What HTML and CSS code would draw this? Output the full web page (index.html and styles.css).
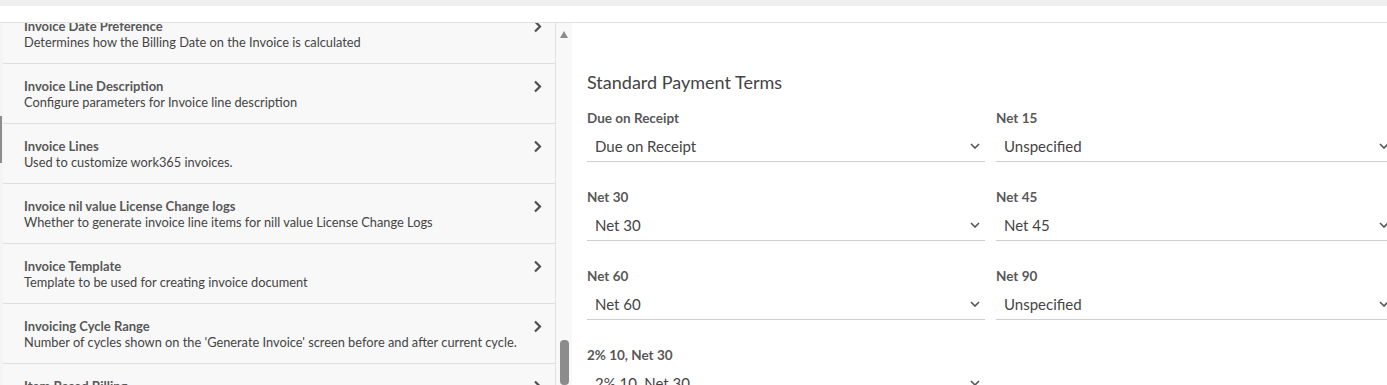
FILE: index.html
```html
<!DOCTYPE html>
<html>
<head>
  <title>Billing Settings</title>
  <link rel="stylesheet" href="styles.css">
</head>
<body>
  <div class="topbar"></div>

  <div class="main">
    <div class="edge"><div class="edge-thumb"></div></div>

    <div class="settings">
      <ul class="setting-list">
        <li class="setting">
          <div class="setting-text">
            <div class="setting-title">Invoice Date Preference</div>
            <div class="setting-desc">Determines how the Billing Date on the Invoice is calculated</div>
          </div>
          <svg class="chevron-right" width="9" height="13" viewBox="0 0 9 13"><polyline points="2,1.5 7,6.5 2,11.5"/></svg>
        </li>
        <li class="setting">
          <div class="setting-text">
            <div class="setting-title">Invoice Line Description</div>
            <div class="setting-desc">Configure parameters for Invoice line description</div>
          </div>
          <svg class="chevron-right" width="9" height="13" viewBox="0 0 9 13"><polyline points="2,1.5 7,6.5 2,11.5"/></svg>
        </li>
        <li class="setting">
          <div class="setting-text">
            <div class="setting-title">Invoice Lines</div>
            <div class="setting-desc">Used to customize work365 invoices.</div>
          </div>
          <svg class="chevron-right" width="9" height="13" viewBox="0 0 9 13"><polyline points="2,1.5 7,6.5 2,11.5"/></svg>
        </li>
        <li class="setting">
          <div class="setting-text">
            <div class="setting-title">Invoice nil value License Change logs</div>
            <div class="setting-desc">Whether to generate invoice line items for nill value License Change Logs</div>
          </div>
          <svg class="chevron-right" width="9" height="13" viewBox="0 0 9 13"><polyline points="2,1.5 7,6.5 2,11.5"/></svg>
        </li>
        <li class="setting">
          <div class="setting-text">
            <div class="setting-title">Invoice Template</div>
            <div class="setting-desc">Template to be used for creating invoice document</div>
          </div>
          <svg class="chevron-right" width="9" height="13" viewBox="0 0 9 13"><polyline points="2,1.5 7,6.5 2,11.5"/></svg>
        </li>
        <li class="setting">
          <div class="setting-text">
            <div class="setting-title">Invoicing Cycle Range</div>
            <div class="setting-desc">Number of cycles shown on the 'Generate Invoice' screen before and after current cycle.</div>
          </div>
          <svg class="chevron-right" width="9" height="13" viewBox="0 0 9 13"><polyline points="2,1.5 7,6.5 2,11.5"/></svg>
        </li>
        <li class="setting">
          <div class="setting-text">
            <div class="setting-title">Item Based Billing</div>
            <div class="setting-desc">Bill customers based on the items on the agreement</div>
          </div>
          <svg class="chevron-right" width="9" height="13" viewBox="0 0 9 13"><polyline points="2,1.5 7,6.5 2,11.5"/></svg>
        </li>
      </ul>
    </div>

    <div class="list-scroll">
      <span class="arrow-up"></span>
      <div class="list-thumb"></div>
    </div>

    <div class="detail">
      <h2 class="detail-title">Standard Payment Terms</h2>
      <div class="terms">
        <div class="field">
          <label class="field-label">Due on Receipt</label>
          <div class="select-box"><span>Due on Receipt</span><svg class="chevron-down" width="10" height="6" viewBox="0 0 10 6"><polyline points="1,1 5,5 9,1"/></svg></div>
        </div>
        <div class="field">
          <label class="field-label">Net 15</label>
          <div class="select-box"><span>Unspecified</span><svg class="chevron-down" width="10" height="6" viewBox="0 0 10 6"><polyline points="1,1 5,5 9,1"/></svg></div>
        </div>
        <div class="field">
          <label class="field-label">Net 30</label>
          <div class="select-box"><span>Net 30</span><svg class="chevron-down" width="10" height="6" viewBox="0 0 10 6"><polyline points="1,1 5,5 9,1"/></svg></div>
        </div>
        <div class="field">
          <label class="field-label">Net 45</label>
          <div class="select-box"><span>Net 45</span><svg class="chevron-down" width="10" height="6" viewBox="0 0 10 6"><polyline points="1,1 5,5 9,1"/></svg></div>
        </div>
        <div class="field">
          <label class="field-label">Net 60</label>
          <div class="select-box"><span>Net 60</span><svg class="chevron-down" width="10" height="6" viewBox="0 0 10 6"><polyline points="1,1 5,5 9,1"/></svg></div>
        </div>
        <div class="field">
          <label class="field-label">Net 90</label>
          <div class="select-box"><span>Unspecified</span><svg class="chevron-down" width="10" height="6" viewBox="0 0 10 6"><polyline points="1,1 5,5 9,1"/></svg></div>
        </div>
        <div class="field">
          <label class="field-label">2% 10, Net 30</label>
          <div class="select-box"><span>2% 10, Net 30</span><svg class="chevron-down" width="10" height="6" viewBox="0 0 10 6"><polyline points="1,1 5,5 9,1"/></svg></div>
        </div>
      </div>
    </div>
  </div>
</body>
</html>
```

FILE: styles.css
```css
html, body {
  margin: 0;
  height: 100%;
  overflow: hidden;
}
body {
  font-family: Lato, "Open Sans", sans-serif;
  color: #444;
  background: #fff;
}
.topbar {
  height: 6px;
  background: #f0f0f0;
  border-bottom: 16px solid #fff;
  box-shadow: 0 1px 0 #e1e1e1;
}
.main {
  display: flex;
  height: 362px;
  margin-top: 1px;
  overflow: hidden;
}

/* thin strip of the outer panel on the far left */
.edge {
  width: 3px;
  flex-shrink: 0;
  background: #f4f4f4;
}
.edge-thumb {
  width: 2px;
  height: 47px;
  margin-top: 93px;
  background: #8c8c8c;
}

.settings {
  width: 552px;
  flex-shrink: 0;
  background: #f8f8f8;
  border-right: 1px solid #e1e1e1;
  overflow: hidden;
}
.setting-list {
  list-style: none;
  margin: -19px 0 0;
  padding: 0;
}
.setting {
  display: flex;
  align-items: flex-start;
  justify-content: space-between;
  height: 60px;
  box-sizing: border-box;
  padding: 14px 13px 0 21px;
  border-bottom: 1px solid #dedede;
}
.setting-title {
  font-size: 13px;
  font-weight: 700;
  line-height: 16px;
  color: #585858;
}
.setting-desc {
  font-size: 12.8px;
  line-height: 16px;
  color: #444;
}
.chevron-right {
  margin-top: 2px;
  fill: none;
  stroke: #505050;
  stroke-width: 2.2;
}

.list-scroll {
  width: 16px;
  flex-shrink: 0;
  background: #f8f8f8;
  display: flex;
  flex-direction: column;
  align-items: center;
}
.arrow-up {
  width: 0;
  height: 0;
  margin-top: 8px;
  border-left: 4.5px solid transparent;
  border-right: 4.5px solid transparent;
  border-bottom: 7px solid #8c8c8c;
}
.list-thumb {
  width: 9px;
  height: 60px;
  margin-top: 302px;
  border-radius: 4px;
  background: #8c8c8c;
}

.detail {
  flex: 1;
  padding: 47px 0 0 15px;
  overflow: hidden;
}
.detail-title {
  margin: 0;
  font-size: 18px;
  font-weight: 400;
  line-height: 24px;
  color: #444;
}
.terms {
  display: grid;
  grid-template-columns: 398px 398px;
  column-gap: 11px;
  row-gap: 26px;
  margin-top: 15px;
}
.field-label {
  display: block;
  font-size: 13.5px;
  font-weight: 700;
  line-height: 18px;
  color: #585858;
}
.select-box {
  display: flex;
  align-items: center;
  justify-content: space-between;
  height: 30px;
  margin-top: 4px;
  padding: 0 5px 0 8px;
  border-bottom: 1px solid #cfcfcf;
  font-size: 15px;
  color: #444;
}
.chevron-down {
  fill: none;
  stroke: #555;
  stroke-width: 1.6;
}
```
